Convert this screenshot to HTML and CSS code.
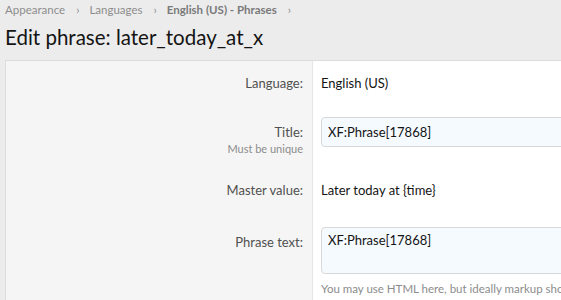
FILE: index.html
```html
<!DOCTYPE html>
<html lang="en">
<head>
    <meta charset="UTF-8">
    <title>Edit phrase: later_today_at_x</title>
    <link rel="stylesheet" href="styles.css">
</head>
<body>
    <ul class="crumbs">
        <li><a href="#">Appearance</a></li>
        <li><a href="#">Languages</a></li>
        <li><a href="#" class="current">English (US) - Phrases</a></li>
    </ul>
    <h1 class="page-title">Edit phrase: later_today_at_x</h1>

    <form class="block">
        <div class="form-row">
            <div class="row-label">Language:</div>
            <div class="row-value">
                <div class="plain">English (US)</div>
            </div>
        </div>
        <div class="form-row">
            <div class="row-label row-label-input">
                Title:
                <span class="hint">Must be unique</span>
            </div>
            <div class="row-value">
                <input type="text" class="input" value="XF:Phrase[17868]">
            </div>
        </div>
        <div class="form-row">
            <div class="row-label">Master value:</div>
            <div class="row-value">
                <div class="plain">Later today at {time}</div>
            </div>
        </div>
        <div class="form-row form-row-text">
            <div class="row-label row-label-input">Phrase text:</div>
            <div class="row-value">
                <textarea class="input textarea">XF:Phrase[17868]</textarea>
                <div class="explain">You may use HTML here, but ideally markup should be kept to a minimum.</div>
            </div>
        </div>
    </form>
</body>
</html>
```

FILE: styles.css
```css
body {
    margin: 0;
    background: #ececec;
    font-family: Lato, "Open Sans", sans-serif;
    font-size: 13px;
    color: #141414;
    overflow: hidden;
}
.crumbs {
    list-style: none;
    margin: 0;
    padding: 1px 5px 0;
    display: flex;
    font-size: 11.5px;
    line-height: 18px;
}
.crumbs li::after {
    content: "\203A";
    margin: 0 10px 0 11px;
    color: #8c8c8c;
}
.crumbs a {
    color: #8c8c8c;
    text-decoration: none;
}
.crumbs a.current {
    font-weight: bold;
    color: #7a7a7a;
}
.page-title {
    margin: 3px 0 0 5px;
    font-size: 20.5px;
    font-weight: 400;
    line-height: 30px;
    color: #141414;
}
.block {
    margin: 8px 0 0 5px;
    width: 620px;
    border: 1px solid #dcdcdc;
    background: #fff;
}
.form-row {
    display: grid;
    grid-template-columns: 307px 1fr;
}
.row-label {
    background: #f5f5f5;
    border-right: 1px solid #e6e6e6;
    text-align: right;
    padding: 12px 9px 12px 10px;
    line-height: 20px;
    color: #505050;
}
.row-label-input {
    padding-top: 17px;
}
.hint {
    display: block;
    font-size: 11px;
    line-height: 14px;
    color: #8c8c8c;
}
.row-value {
    padding: 12px 10px 12px 8px;
}
.form-row-text .row-label {
    padding-top: 20px;
}
.form-row-text .row-value {
    padding-top: 15px;
}
.plain {
    line-height: 20px;
}
.input {
    display: block;
    box-sizing: border-box;
    width: 100%;
    height: 30px;
    padding: 0 6px;
    border: 1px solid #d8d8d8;
    border-radius: 4px;
    background: #f5faff;
    font: inherit;
    color: #141414;
}
.textarea {
    height: 47px;
    padding-top: 4px;
    resize: none;
}
.explain {
    margin-top: 7px;
    font-size: 11.5px;
    line-height: 15px;
    color: #8c8c8c;
    white-space: nowrap;
}
```
